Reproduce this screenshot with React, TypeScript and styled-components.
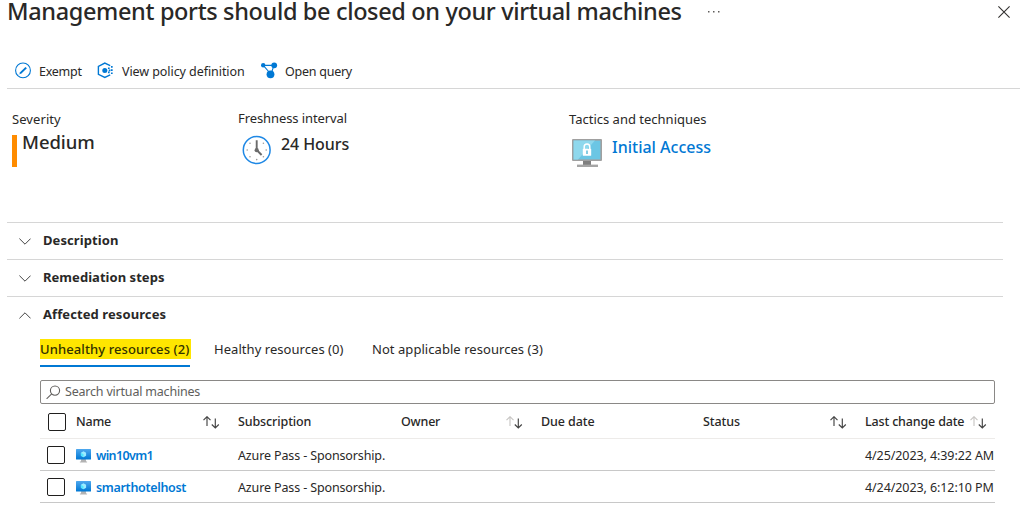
import React from 'react';
import styled, { createGlobalStyle } from 'styled-components';

const GlobalStyle = createGlobalStyle`
  * { box-sizing: border-box; }
  html, body { margin: 0; background: #fff; }
  body {
    color: #292827;
    font: 400 13px/20px 'Noto Sans', 'Open Sans', sans-serif;
    white-space: nowrap;
  }
  svg { display: block; flex: none; }
  button { border: 0; padding: 0; background: none; color: inherit; font: inherit; letter-spacing: inherit; text-align: left; }
`;

const Blade = styled.main`
  width: 1020px;
  height: 510px;
`;

const Header = styled.header`
  display: flex;
  align-items: center;
  height: 24px;
  padding: 0 10px 0 7px;
`;

const Title = styled.h1`
  margin: 0 23px 2px 0;
  width: 678px;
  font-size: 23.5px;
  line-height: 22px;
  font-weight: 500;
  letter-spacing: -0.36px;
`;

const CloseButton = styled.button`
  margin-left: auto;
`;

const Toolbar = styled.nav`
  display: flex;
  align-items: center;
  height: 35px;
  margin: 30px 0 0 7px;
  padding: 1px 0 0 8px;
  border-bottom: 1px solid #d6d6d6;
`;

const Command = styled.button<{ $width: number; $gap: number; $track: number }>`
  display: flex;
  align-items: center;
  gap: ${(p) => p.$gap}px;
  width: ${(p) => p.$width}px;
  font-size: 12.5px;
  letter-spacing: ${(p) => p.$track}px;

  svg { margin-bottom: 3px; }
`;

const Summary = styled.section`
  display: grid;
  grid-template-columns: 226px 331px 1fr;
  height: 133px;
  padding: 20px 0 0 12px;
`;

const Metric = styled.div<{ $lift?: number }>`
  margin-top: ${(p) => -(p.$lift ?? 0)}px;
`;

const MetricLabel = styled.div<{ $track?: number }>`
  height: 20px;
  letter-spacing: ${(p) => p.$track ?? 0}px;
`;

const SeverityValue = styled.div`
  display: flex;
  gap: 5px;
  height: 38px;
  font-size: 18.5px;
  line-height: 26px;
  font-weight: 500;
  letter-spacing: -0.1px;

  &::before {
    content: '';
    width: 5px;
    height: 32px;
    margin-top: 6px;
    background: #ff8c00;
  }
`;

const MetricValue = styled.div<{ $gap: number; $inset: number; $drop: number }>`
  display: flex;
  gap: ${(p) => p.$gap}px;
  padding-left: ${(p) => p.$inset}px;
  font-size: 16px;
  line-height: 32px;
  font-weight: 500;
  letter-spacing: -0.08px;

  svg { margin-top: ${(p) => p.$drop}px; }
`;

const TacticLink = styled.a`
  color: #0078d4;
  line-height: 36px;
  letter-spacing: 0;
`;

const Sections = styled.div`
  width: 996px;
  margin-left: 7px;
`;

const SectionHeader = styled.button<{ $track: number }>`
  display: flex;
  align-items: center;
  gap: 12px;
  width: 100%;
  height: 37px;
  padding: 0 0 2px 12px;
  border-top: 1px solid #d6d6d6;
  font-weight: 700;
  letter-spacing: ${(p) => p.$track}px;

  svg { margin-top: 2px; }
`;

const Resources = styled.div`
  width: 955px;
  margin-left: 33px;
`;

const Tabs = styled.div`
  display: flex;
  height: 34px;
  margin-top: 6px;
`;

const Tab = styled.button<{ $active?: boolean; $width: number }>`
  width: ${(p) => p.$width}px;
  height: 28px;
  margin-right: 24px;
  display: flex;
  align-items: flex-start;
  font-weight: ${(p) => (p.$active ? 500 : 400)};
  letter-spacing: ${(p) => (p.$active ? 0.1 : 0.05)}px;
  border-bottom: 2px solid ${(p) => (p.$active ? '#0078d4' : 'transparent')};
`;

const Highlight = styled.mark`
  flex: none;
  width: 151px;
  height: 20px;
  background: #ffe600;
  color: #323100;
`;

const SearchBox = styled.label`
  display: flex;
  align-items: center;
  gap: 4px;
  height: 24px;
  margin-top: 7px;
  padding: 0 0 1px 5px;
  border: 1px solid #8a8886;
  border-radius: 2px;
  color: #605e5c;
  font-size: 12.5px;
  letter-spacing: -0.2px;
`;

const Row = styled.div<{ $head?: boolean }>`
  display: grid;
  grid-template-columns: 36px 162px 163px 140px 162px 162px 130px;
  align-items: center;
  height: ${(p) => (p.$head ? 35 : 32)}px;
  padding-top: 2px;
  border-bottom: 1px solid ${(p) => (p.$head ? '#edebe9' : '#c8c8c8')};
  font-size: 12.5px;
`;

const Checkbox = styled.span<{ $inset: number; $lift?: number }>`
  width: 18px;
  height: 18px;
  margin: 0 0 ${(p) => p.$lift ?? 0}px ${(p) => p.$inset}px;
  border: 1px solid #201f1e;
  border-radius: 2px;
`;

const HeadCell = styled.div<{ $track: number; $sortEnd?: number }>`
  display: flex;
  align-items: center;
  justify-content: space-between;
  margin-bottom: 1px;
  padding-right: ${(p) => p.$sortEnd ?? 0}px;
  font-weight: 500;
  letter-spacing: ${(p) => p.$track}px;

  svg { margin-top: 1px; }
`;

const Cell = styled.div<{ $track?: number; $from?: number }>`
  grid-column-start: ${(p) => p.$from ?? 'auto'};
  letter-spacing: ${(p) => p.$track ?? 0}px;
`;

const MachineLink = styled.a<{ $track: number }>`
  display: flex;
  align-items: center;
  gap: 5px;
  color: #0078d4;
  font-weight: 600;
  letter-spacing: ${(p) => p.$track}px;
`;

const ExemptIcon = () => (
  <svg width="17" height="17" viewBox="0 0 17 17" fill="none" stroke="#0078d4">
    <circle cx="8" cy="8.4" r="7.4" strokeWidth="1.1" />
    <path d="M5.2 11.4 11.2 5.6" strokeWidth="2" />
    <path d="M4.3 12.3l1.2-1.2" strokeWidth="1" />
  </svg>
);

const PolicyIcon = () => (
  <svg width="17" height="17" viewBox="0 0 17 17" fill="none" stroke="#0078d4">
    <path d="M13.2 3.7 7.8 1.1 1.4 4.5v7.8l6.4 3.1 5.4-2.6" strokeWidth="1.4" />
    <circle cx="7.8" cy="8.4" r="2.5" fill="#0078d4" stroke="none" />
    <path d="M11.8 5.4v1.7M11.8 9.6v1.7M14.8 4v1.7M14.8 7.2v1.7M14.8 10.4v1.7M12.6 7.5v1.7" strokeWidth="1.7" />
  </svg>
);

const QueryIcon = () => (
  <svg width="17" height="17" viewBox="0 0 17 17" fill="#0078d4">
    <path d="M2.3 3.4H13M2.3 3.4l6.6 7.6M13 3.4 10 12" stroke="#0078d4" strokeWidth="1.1" />
    <circle cx="2.2" cy="3.2" r="2.2" />
    <circle cx="13.2" cy="3.3" r="2.9" />
    <circle cx="9.5" cy="12.3" r="3.9" />
  </svg>
);

const ClockIcon = () => (
  <svg width="30" height="30" viewBox="0 0 30 30">
    <circle cx="14.7" cy="15" r="13.4" fill="#fff" stroke="#1e88e5" strokeWidth="1.5" />
    <g fill="#9a9a9a">
      <circle cx="5.2" cy="15" r=".8" />
      <circle cx="24.2" cy="15" r=".8" />
      <circle cx="14.7" cy="24.6" r=".8" />
      <circle cx="8" cy="8.2" r=".8" />
      <circle cx="21.4" cy="8.2" r=".8" />
      <circle cx="8" cy="21.7" r=".8" />
      <circle cx="21.4" cy="21.7" r=".8" />
    </g>
    <path d="M14.7 5.2V15l4.9 5" fill="none" stroke="#6b6b6b" strokeWidth="1.9" />
    <circle cx="14.7" cy="15.2" r="2.1" fill="#6b6b6b" />
  </svg>
);

const LockedMonitorIcon = () => (
  <svg width="30" height="28" viewBox="0 0 30 28">
    <path d="M11 21h8v5h-8z" fill="#7f7f7f" />
    <path d="M5 25.6h21V28H5z" fill="#a5a5a5" />
    <rect width="30" height="22" rx="1" fill="#a0a0a0" />
    <rect x="1.6" y="1.6" width="26.8" height="18.8" fill="#6bc6e4" />
    <path d="M1.6 1.6H23L6 20.4H1.6z" fill="#8ed8ed" />
    <path d="M12.2 10V7.8a2.8 2.8 0 0 1 5.6 0V10" fill="none" stroke="#fff" strokeWidth="1.5" />
    <rect x="10.8" y="9.8" width="8.4" height="7" rx=".6" fill="#fff" />
    <path d="M15 11.5v3.4" stroke="#5cbbd9" strokeWidth="1.5" />
  </svg>
);

const MachineIcon = () => (
  <svg width="15" height="14" viewBox="0 0 15 14">
    <defs>
      <linearGradient id="screen" x1="0" y1="1" x2="0" y2="0">
        <stop stopColor="#0078d4" />
        <stop offset="1" stopColor="#4fa8ee" />
      </linearGradient>
    </defs>
    <path d="M5.2 10h4.6l.3 2.6h1v1H3.9v-1h1z" fill="#b3b3b3" />
    <rect width="15" height="10.4" rx=".5" fill="url(#screen)" />
    <path d="M7.5 2.2 10.1 3.7v3L7.5 8.2 4.9 6.7v-3z" fill="#9cebff" />
    <path d="M7.5 5.2V8.2L4.9 6.7v-3z" fill="#50e6ff" />
  </svg>
);

const Chevron = ({ up }: { up?: boolean }) => (
  <svg width="12" height="7" viewBox="0 0 12 7" fill="none" stroke="#444" strokeWidth="1">
    <path d={up ? 'M.4 6.4 6 .8l5.6 5.6' : 'M.4.6 6 6.2 11.6.6'} />
  </svg>
);

const SortIcon = ({ dimUp }: { dimUp?: boolean }) => (
  <svg width="17" height="13" viewBox="0 0 17 13" fill="none" strokeWidth="1.15">
    <path d="M4 10V.8M.5 4.2 4 .7l3.5 3.5" stroke={dimUp ? '#c8c6c4' : '#444'} />
    <path d="M12.3 2.6V12M8.8 8.5l3.5 3.5 3.5-3.5" stroke="#444" />
  </svg>
);

const SearchIcon = () => (
  <svg width="15" height="14" viewBox="0 0 15 14" fill="none" stroke="#605e5c" strokeWidth="1.1">
    <circle cx="9" cy="5.6" r="4.6" />
    <path d="M5.7 8.9.6 13.8" />
  </svg>
);

const machines = [
  { name: 'win10vm1', track: -0.65, subscription: 'Azure Pass - Sponsorship.', changed: '4/25/2023, 4:39:22 AM' },
  { name: 'smarthotelhost', track: -0.32, subscription: 'Azure Pass - Sponsorship.', changed: '4/24/2023, 6:12:10 PM' },
];

export default function App() {
  return (
    <Blade>
      <GlobalStyle />
      <Header>
        <Title>Management ports should be closed on your virtual machines</Title>
        <svg width="12" height="2" viewBox="0 0 12 2" fill="#605e5c">
          <path d="M0 0h1.5v1.5H0zM5 0h1.5v1.5H5zM10 0h1.5v1.5H10z" />
        </svg>
        <CloseButton aria-label="Close">
          <svg width="12" height="12" viewBox="0 0 12 12" stroke="#323130" strokeWidth="1.1">
            <path d="M.4.4l11.2 11.2M11.6.4.4 11.6" />
          </svg>
        </CloseButton>
      </Header>

      <Toolbar>
        <Command $width={82} $gap={7} $track={-0.25}><ExemptIcon />Exempt</Command>
        <Command $width={164} $gap={8} $track={-0.07}><PolicyIcon />View policy definition</Command>
        <Command $width={100} $gap={7} $track={-0.25}><QueryIcon />Open query</Command>
      </Toolbar>

      <Summary>
        <Metric>
          <MetricLabel $track={0.08}>Severity</MetricLabel>
          <SeverityValue>Medium</SeverityValue>
        </Metric>
        <Metric $lift={1}>
          <MetricLabel $track={-0.09}>Freshness interval</MetricLabel>
          <MetricValue $gap={9} $inset={4} $drop={7}><ClockIcon />24 Hours</MetricValue>
        </Metric>
        <Metric>
          <MetricLabel>Tactics and techniques</MetricLabel>
          <MetricValue $gap={10} $inset={3} $drop={10}>
            <LockedMonitorIcon />
            <TacticLink>Initial Access</TacticLink>
          </MetricValue>
        </Metric>
      </Summary>

      <Sections>
        <SectionHeader $track={0.08}><Chevron />Description</SectionHeader>
        <SectionHeader $track={0.04}><Chevron />Remediation steps</SectionHeader>
        <SectionHeader $track={0.09}><Chevron up />Affected resources</SectionHeader>
        <Resources>
          <Tabs>
            <Tab $active $width={150}><Highlight>Unhealthy resources (2)</Highlight></Tab>
            <Tab $width={134}>Healthy resources (0)</Tab>
            <Tab $width={172}>Not applicable resources (3)</Tab>
          </Tabs>
          <SearchBox><SearchIcon />Search virtual machines</SearchBox>
          <Row $head>
            <Checkbox $inset={8} />
            <HeadCell $track={-0.2} $sortEnd={18}>Name<SortIcon /></HeadCell>
            <HeadCell $track={-0.12}>Subscription</HeadCell>
            <HeadCell $track={-0.2} $sortEnd={18}>Owner<SortIcon dimUp /></HeadCell>
            <HeadCell $track={-0.1}>Due date</HeadCell>
            <HeadCell $track={-0.1} $sortEnd={18}>Status<SortIcon /></HeadCell>
            <HeadCell $track={-0.16} $sortEnd={8}>Last change date<SortIcon dimUp /></HeadCell>
          </Row>
          {machines.map((m) => (
            <Row key={m.name}>
              <Checkbox $inset={7} $lift={2} />
              <MachineLink $track={m.track}><MachineIcon />{m.name}</MachineLink>
              <Cell $track={-0.13}>{m.subscription}</Cell>
              <Cell $track={-0.09} $from={7}>{m.changed}</Cell>
            </Row>
          ))}
        </Resources>
      </Sections>
    </Blade>
  );
}
